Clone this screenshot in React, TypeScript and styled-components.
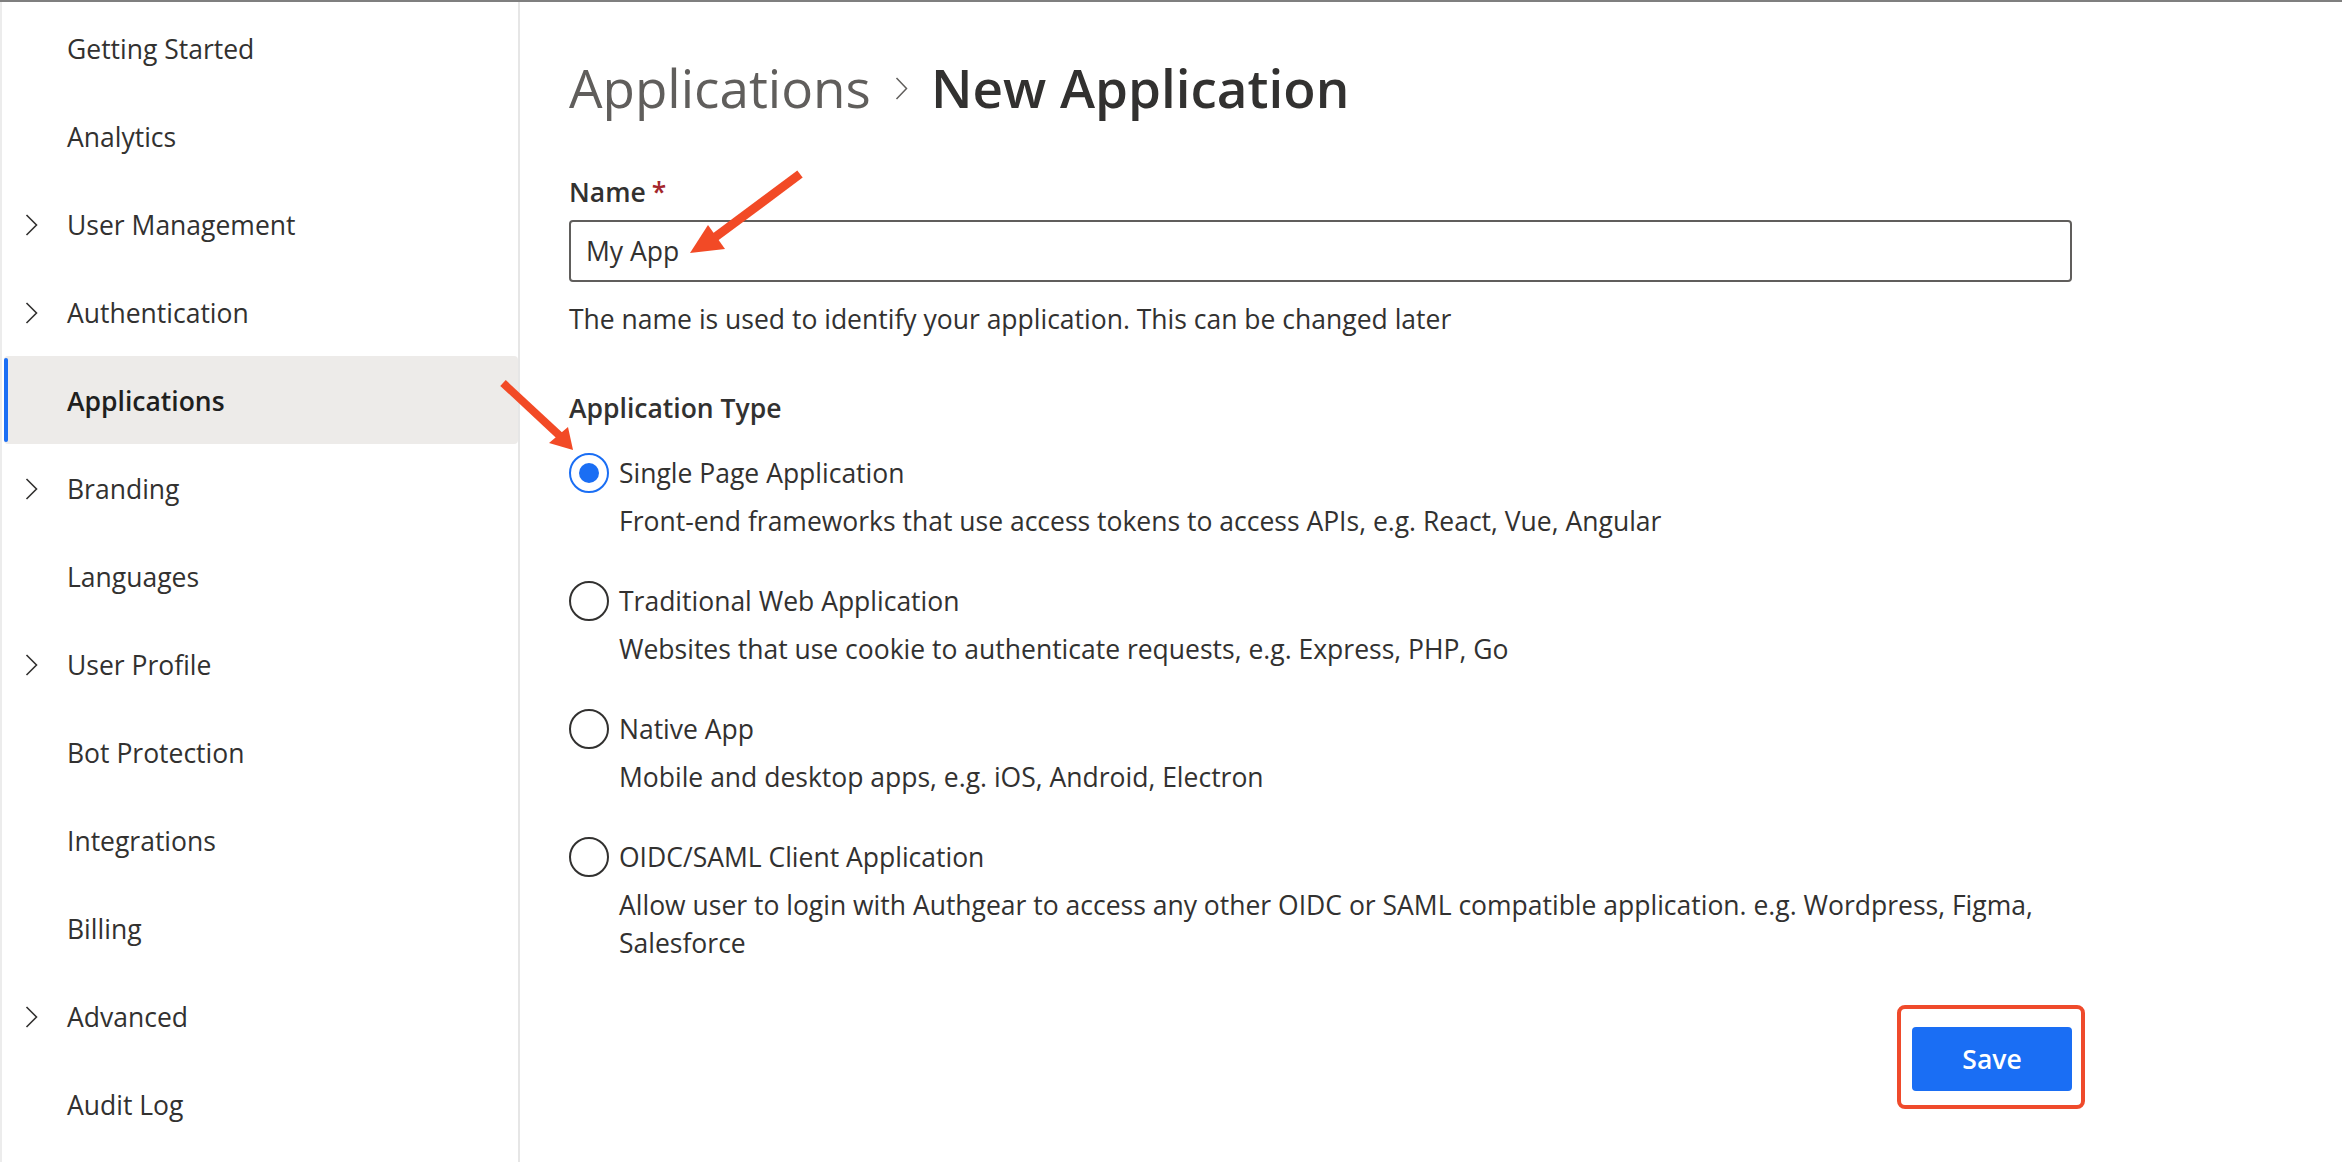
import React from "react";
import styled, { createGlobalStyle } from "styled-components";

const GlobalStyle = createGlobalStyle`
  html, body { margin: 0; padding: 0; background: #ffffff; }
  body { font-family: "Open Sans", "Noto Sans", sans-serif; color: #323130; }
  *, *::before, *::after { box-sizing: border-box; }
`;

const Page = styled.div`
  position: relative;
  display: flex;
  min-height: 100vh;
  border-top: 2px solid #7f7f7f;
`;

const Sidebar = styled.nav`
  width: 520px;
  flex-shrink: 0;
  border-left: 2px solid #ececec;
  border-right: 2px solid #e6e6e6;
  padding-top: 2px;
  display: flex;
  flex-direction: column;
`;

const NavItem = styled.div<{ $active?: boolean }>`
  position: relative;
  display: flex;
  align-items: center;
  height: 88px;
  padding-top: 2px;
  margin-left: 2px;
  border-radius: 4px;
  background: ${(p) => (p.$active ? "#edebe9" : "transparent")};
  font-size: 26.5px;
  line-height: 38px;
  font-weight: ${(p) => (p.$active ? 600 : 400)};
  color: ${(p) => (p.$active ? "#201f1e" : "#323130")};
  white-space: nowrap;

  &::before {
    content: "";
    display: ${(p) => (p.$active ? "block" : "none")};
    position: absolute;
    left: 0;
    top: 2px;
    bottom: 2px;
    width: 4px;
    border-radius: 2px;
    background: #1a6ef4;
  }
`;

const ChevronSlot = styled.span`
  display: flex;
  align-items: center;
  width: 63px;
  padding-left: 21px;
  flex-shrink: 0;
`;

const Main = styled.main`
  flex: 1;
  padding: 50px 0 0 49px;
  display: flex;
  flex-direction: column;
`;

const Title = styled.h1`
  display: flex;
  align-items: center;
  margin: 0;
  font-size: 53px;
  line-height: 72px;
  white-space: nowrap;
`;

const Crumb = styled.span`
  color: #605e5c;
  font-weight: 400;
`;

const CurrentCrumb = styled.span`
  color: #323130;
  font-weight: 600;
`;

const CrumbChevron = styled.svg`
  margin: 0 23px 0 24px;
  flex-shrink: 0;
`;

const Label = styled.div<{ $mt: number }>`
  margin-top: ${(p) => p.$mt}px;
  font-size: 26.5px;
  line-height: 38px;
  font-weight: 600;
  color: #323130;
`;

const Required = styled.span`
  color: #a4262c;
  margin-left: 6px;
`;

const TextInput = styled.input`
  margin-top: 9px;
  width: 1503px;
  height: 62px;
  border: 2px solid #605e5c;
  border-radius: 4px;
  padding: 0 15px;
  font-family: inherit;
  font-size: 26.5px;
  color: #323130;
  background: #fff;
  outline: none;
`;

const Helper = styled.div`
  margin-top: 18px;
  font-size: 26.5px;
  line-height: 38px;
  color: #323130;
  white-space: nowrap;
`;

const Options = styled.div`
  margin-top: 26px;
  display: flex;
  flex-direction: column;
  gap: 41px;
`;

const Option = styled.div`
  display: flex;
  flex-direction: column;
`;

const OptionRow = styled.div`
  display: flex;
  align-items: center;
  height: 40px;
  gap: 10px;
`;

const Circle = styled.span<{ $checked?: boolean }>`
  width: 40px;
  height: 40px;
  border-radius: 50%;
  border: 2px solid ${(p) => (p.$checked ? "#1a6ef4" : "#323130")};
  display: flex;
  align-items: center;
  justify-content: center;
  flex-shrink: 0;
`;

const Dot = styled.span`
  width: 20px;
  height: 20px;
  border-radius: 50%;
  background: #1a6ef4;
`;

const OptionLabel = styled.span`
  font-size: 26.5px;
  line-height: 40px;
  color: #323130;
  white-space: nowrap;
`;

const OptionDesc = styled.div`
  margin-top: 9px;
  padding-left: 50px;
  font-size: 26.5px;
  line-height: 38px;
  color: #323130;
  white-space: nowrap;
`;

const Actions = styled.div`
  margin-top: 65px;
  width: 1503px;
  display: flex;
  justify-content: flex-end;
`;

const ButtonWrap = styled.div`
  position: relative;
`;

const SaveButton = styled.button`
  width: 160px;
  height: 64px;
  border: none;
  border-radius: 4px;
  background: #1a6ef4;
  color: #ffffff;
  font-family: inherit;
  font-size: 26.5px;
  font-weight: 600;
  cursor: pointer;
`;

const Highlight = styled.span`
  position: absolute;
  left: -15px;
  right: -13px;
  top: -22px;
  bottom: -18px;
  border: 4px solid #ef4a2b;
  border-radius: 8px;
  pointer-events: none;
`;

const Annotations = styled.svg`
  position: absolute;
  top: -2px;
  left: 0;
  pointer-events: none;
`;

const NavChevron = () => (
  <svg width="13" height="22" viewBox="0 0 13 22">
    <polyline points="1.5,1 11.5,11 1.5,21" fill="none" stroke="#323130" strokeWidth="1.6" />
  </svg>
);

type Nav = { label: string; expandable?: boolean; active?: boolean };

const navItems: Nav[] = [
  { label: "Getting Started" },
  { label: "Analytics" },
  { label: "User Management", expandable: true },
  { label: "Authentication", expandable: true },
  { label: "Applications", active: true },
  { label: "Branding", expandable: true },
  { label: "Languages" },
  { label: "User Profile", expandable: true },
  { label: "Bot Protection" },
  { label: "Integrations" },
  { label: "Billing" },
  { label: "Advanced", expandable: true },
  { label: "Audit Log" },
];

type AppType = { label: string; desc: React.ReactNode; checked?: boolean };

const appTypes: AppType[] = [
  {
    label: "Single Page Application",
    desc: "Front-end frameworks that use access tokens to access APIs, e.g. React, Vue, Angular",
    checked: true,
  },
  {
    label: "Traditional Web Application",
    desc: "Websites that use cookie to authenticate requests, e.g. Express, PHP, Go",
  },
  {
    label: "Native App",
    desc: "Mobile and desktop apps, e.g. iOS, Android, Electron",
  },
  {
    label: "OIDC/SAML Client Application",
    desc: (
      <>
        Allow user to login with Authgear to access any other OIDC or SAML compatible application. e.g. Wordpress, Figma,
        <br />
        Salesforce
      </>
    ),
  },
];

export default function App() {
  return (
    <>
      <GlobalStyle />
      <Page>
        <Sidebar>
          {navItems.map((item) => (
            <NavItem key={item.label} $active={item.active}>
              <ChevronSlot>{item.expandable ? <NavChevron /> : null}</ChevronSlot>
              {item.label}
            </NavItem>
          ))}
        </Sidebar>
        <Main>
          <Title>
            <Crumb>Applications</Crumb>
            <CrumbChevron width="13" height="23" viewBox="0 0 13 23">
              <polyline points="1.5,1 11.5,11.5 1.5,22" fill="none" stroke="#605e5c" strokeWidth="1.5" />
            </CrumbChevron>
            <CurrentCrumb>New Application</CurrentCrumb>
          </Title>

          <Label $mt={49}>
            Name<Required>*</Required>
          </Label>
          <TextInput defaultValue="My App" readOnly />
          <Helper>The name is used to identify your application. This can be changed later</Helper>

          <Label $mt={51}>Application Type</Label>
          <Options>
            {appTypes.map((t) => (
              <Option key={t.label}>
                <OptionRow>
                  <Circle $checked={t.checked}>{t.checked ? <Dot /> : null}</Circle>
                  <OptionLabel>{t.label}</OptionLabel>
                </OptionRow>
                <OptionDesc>{t.desc}</OptionDesc>
              </Option>
            ))}
          </Options>

          <Actions>
            <ButtonWrap>
              <SaveButton>Save</SaveButton>
              <Highlight />
            </ButtonWrap>
          </Actions>
        </Main>

        <Annotations width="2342" height="1162" viewBox="0 0 2342 1162">
          <line x1="800" y1="174" x2="714" y2="238" stroke="#f24a26" strokeWidth="9" />
          <polygon points="690,253 708,225 725,249" fill="#f24a26" />
          <line x1="503" y1="383" x2="560" y2="436" stroke="#f24a26" strokeWidth="8" />
          <polygon points="573,450 549,443 568,427" fill="#f24a26" />
        </Annotations>
      </Page>
    </>
  );
}
